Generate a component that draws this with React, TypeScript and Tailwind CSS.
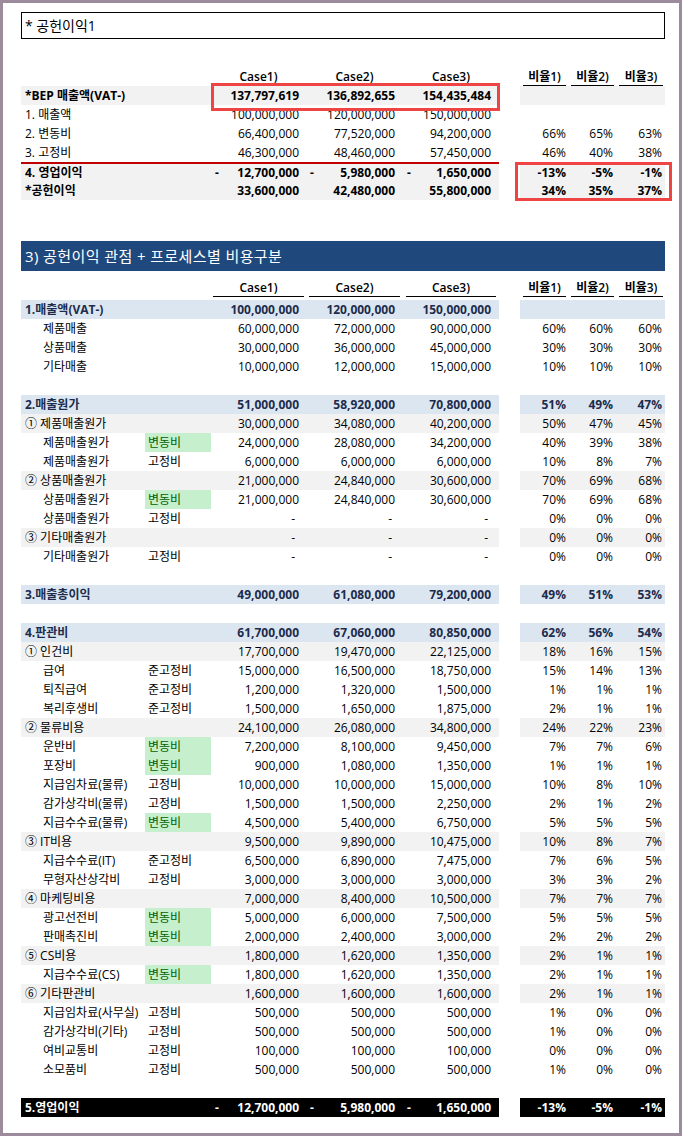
type Kind = "head" | "bep" | "plain" | "bold" | "cat" | "grp" | "item" | "empty" | "total";

type Row = {
  k: Kind;
  label?: string;
  tag?: string;
  v?: string[];
  p?: string[];
  line?: boolean;
};

const grid = "grid grid-cols-[124px_66px_95px_97px_96px_21px_48px_48px_49px]";
const valPad = ["pr-[7px]", "pr-[8px]", "pr-[8px]"];
const pctPad = ["pr-[2px]", "pr-[3px]", "pr-[3px]"];

const summary: Row[] = [
  { k: "bep", label: "*BEP 매출액(VAT-)", v: ["137,797,619", "136,892,655", "154,435,484"], p: ["", "", ""] },
  { k: "plain", label: "1. 매출액", v: ["100,000,000", "120,000,000", "150,000,000"] },
  { k: "plain", label: "2. 변동비", v: ["66,400,000", "77,520,000", "94,200,000"], p: ["66%", "65%", "63%"] },
  { k: "plain", label: "3. 고정비", v: ["46,300,000", "48,460,000", "57,450,000"], p: ["46%", "40%", "38%"] },
  { k: "bold", label: "4. 영업이익", v: ["-12,700,000", "-5,980,000", "-1,650,000"], p: ["-13%", "-5%", "-1%"], line: true },
  { k: "bold", label: "*공헌이익", v: ["33,600,000", "42,480,000", "55,800,000"], p: ["34%", "35%", "37%"] },
];

const detail: Row[] = [
  { k: "cat", label: "1.매출액(VAT-)", v: ["100,000,000", "120,000,000", "150,000,000"], p: ["", "", ""] },
  { k: "item", label: "제품매출", v: ["60,000,000", "72,000,000", "90,000,000"], p: ["60%", "60%", "60%"] },
  { k: "item", label: "상품매출", v: ["30,000,000", "36,000,000", "45,000,000"], p: ["30%", "30%", "30%"] },
  { k: "item", label: "기타매출", v: ["10,000,000", "12,000,000", "15,000,000"], p: ["10%", "10%", "10%"] },
  { k: "empty" },
  { k: "cat", label: "2.매출원가", v: ["51,000,000", "58,920,000", "70,800,000"], p: ["51%", "49%", "47%"] },
  { k: "grp", label: "① 제품매출원가", v: ["30,000,000", "34,080,000", "40,200,000"], p: ["50%", "47%", "45%"] },
  { k: "item", label: "제품매출원가", tag: "변동비", v: ["24,000,000", "28,080,000", "34,200,000"], p: ["40%", "39%", "38%"] },
  { k: "item", label: "제품매출원가", tag: "고정비", v: ["6,000,000", "6,000,000", "6,000,000"], p: ["10%", "8%", "7%"] },
  { k: "grp", label: "② 상품매출원가", v: ["21,000,000", "24,840,000", "30,600,000"], p: ["70%", "69%", "68%"] },
  { k: "item", label: "상품매출원가", tag: "변동비", v: ["21,000,000", "24,840,000", "30,600,000"], p: ["70%", "69%", "68%"] },
  { k: "item", label: "상품매출원가", tag: "고정비", v: ["-", "-", "-"], p: ["0%", "0%", "0%"] },
  { k: "grp", label: "③ 기타매출원가", v: ["-", "-", "-"], p: ["0%", "0%", "0%"] },
  { k: "item", label: "기타매출원가", tag: "고정비", v: ["-", "-", "-"], p: ["0%", "0%", "0%"] },
  { k: "empty" },
  { k: "cat", label: "3.매출총이익", v: ["49,000,000", "61,080,000", "79,200,000"], p: ["49%", "51%", "53%"] },
  { k: "empty" },
  { k: "cat", label: "4.판관비", v: ["61,700,000", "67,060,000", "80,850,000"], p: ["62%", "56%", "54%"] },
  { k: "grp", label: "① 인건비", v: ["17,700,000", "19,470,000", "22,125,000"], p: ["18%", "16%", "15%"] },
  { k: "item", label: "급여", tag: "준고정비", v: ["15,000,000", "16,500,000", "18,750,000"], p: ["15%", "14%", "13%"] },
  { k: "item", label: "퇴직급여", tag: "준고정비", v: ["1,200,000", "1,320,000", "1,500,000"], p: ["1%", "1%", "1%"] },
  { k: "item", label: "복리후생비", tag: "준고정비", v: ["1,500,000", "1,650,000", "1,875,000"], p: ["2%", "1%", "1%"] },
  { k: "grp", label: "② 물류비용", v: ["24,100,000", "26,080,000", "34,800,000"], p: ["24%", "22%", "23%"] },
  { k: "item", label: "운반비", tag: "변동비", v: ["7,200,000", "8,100,000", "9,450,000"], p: ["7%", "7%", "6%"] },
  { k: "item", label: "포장비", tag: "변동비", v: ["900,000", "1,080,000", "1,350,000"], p: ["1%", "1%", "1%"] },
  { k: "item", label: "지급임차료(물류)", tag: "고정비", v: ["10,000,000", "10,000,000", "15,000,000"], p: ["10%", "8%", "10%"] },
  { k: "item", label: "감가상각비(물류)", tag: "고정비", v: ["1,500,000", "1,500,000", "2,250,000"], p: ["2%", "1%", "2%"] },
  { k: "item", label: "지급수수료(물류)", tag: "변동비", v: ["4,500,000", "5,400,000", "6,750,000"], p: ["5%", "5%", "5%"] },
  { k: "grp", label: "③ IT비용", v: ["9,500,000", "9,890,000", "10,475,000"], p: ["10%", "8%", "7%"] },
  { k: "item", label: "지급수수료(IT)", tag: "준고정비", v: ["6,500,000", "6,890,000", "7,475,000"], p: ["7%", "6%", "5%"] },
  { k: "item", label: "무형자산상각비", tag: "고정비", v: ["3,000,000", "3,000,000", "3,000,000"], p: ["3%", "3%", "2%"] },
  { k: "grp", label: "④ 마케팅비용", v: ["7,000,000", "8,400,000", "10,500,000"], p: ["7%", "7%", "7%"] },
  { k: "item", label: "광고선전비", tag: "변동비", v: ["5,000,000", "6,000,000", "7,500,000"], p: ["5%", "5%", "5%"] },
  { k: "item", label: "판매촉진비", tag: "변동비", v: ["2,000,000", "2,400,000", "3,000,000"], p: ["2%", "2%", "2%"] },
  { k: "grp", label: "⑤ CS비용", v: ["1,800,000", "1,620,000", "1,350,000"], p: ["2%", "1%", "1%"] },
  { k: "item", label: "지급수수료(CS)", tag: "변동비", v: ["1,800,000", "1,620,000", "1,350,000"], p: ["2%", "1%", "1%"] },
  { k: "grp", label: "⑥ 기타판관비", v: ["1,600,000", "1,600,000", "1,600,000"], p: ["2%", "1%", "1%"] },
  { k: "item", label: "지급임차료(사무실)", tag: "고정비", v: ["500,000", "500,000", "500,000"], p: ["1%", "0%", "0%"] },
  { k: "item", label: "감가상각비(기타)", tag: "고정비", v: ["500,000", "500,000", "500,000"], p: ["1%", "0%", "0%"] },
  { k: "item", label: "여비교통비", tag: "고정비", v: ["100,000", "100,000", "100,000"], p: ["0%", "0%", "0%"] },
  { k: "item", label: "소모품비", tag: "고정비", v: ["500,000", "500,000", "500,000"], p: ["1%", "0%", "0%"] },
  { k: "empty" },
  { k: "total", label: "5.영업이익", v: ["-12,700,000", "-5,980,000", "-1,650,000"], p: ["-13%", "-5%", "-1%"] },
];

const bgOf = (k: Kind) => {
  if (k === "cat") return "bg-[#dce6f1] text-[#1c2c4c] font-bold";
  if (k === "grp") return "bg-[#f2f2f2]";
  if (k === "bep" || k === "bold") return "bg-[#f2f2f2] font-bold";
  if (k === "total") return "bg-black text-white font-bold";
  return "";
};

const Value = ({ s, i }: { s: string; i: number }) => {
  if (s.length > 1 && s.startsWith("-")) {
    return (
      <div className={`flex justify-between pl-[4px] ${valPad[i]}`}>
        <span>-</span>
        <span>{s.slice(1)}</span>
      </div>
    );
  }
  if (s === "-") return <div className="pr-[11px] text-right">-</div>;
  return <div className={`text-right ${valPad[i]}`}>{s}</div>;
};

const DataRow = ({ r }: { r: Row }) => {
  if (r.k === "empty") return <div className="h-[19px]" />;
  const bg = bgOf(r.k);
  const line = r.line ? "border-t-2 border-[#c00000] h-[19px] leading-[17px]" : "h-[19px] leading-[19px]";
  const indent = r.k === "item" ? "pl-[22px]" : "pl-[4px]";
  const green = r.tag === "변동비";
  return (
    <div className={`${grid} whitespace-nowrap`}>
      <div className={`${bg} ${line} ${indent} ${r.tag === undefined ? "col-span-2" : ""}`}>{r.label}</div>
      {r.tag !== undefined && (
        <div className={`${line} pl-[3px] ${green ? "bg-[#c6efce] text-[#006100]" : ""}`}>{r.tag}</div>
      )}
      {r.v?.map((s, i) => (
        <div key={i} className={`${bg} ${line}`}>
          <Value s={s} i={i} />
        </div>
      ))}
      <div />
      {r.p
        ? r.p.map((s, i) => (
            <div key={i} className={`${bg} ${line} text-right ${pctPad[i]}`}>
              {s}
            </div>
          ))
        : [0, 1, 2].map((i) => <div key={i} className={line} />)}
    </div>
  );
};

const HeadRow = ({ underlineCases, tall }: { underlineCases: boolean; tall: boolean }) => {
  const cell = tall ? "h-[26px] mb-[3px]" : "h-[19px]";
  const inner = tall ? "leading-[17px]" : "leading-[16px]";
  return (
    <div className={`${grid} font-semibold whitespace-nowrap`}>
      <div className="col-span-2" />
      {["Case1)", "Case2)", "Case3)"].map((c, i) => (
        <div key={c} className={`${cell} flex items-end ${i === 0 ? "px-[2px]" : "pl-[3px] pr-[3px]"}`}>
          <div className={`w-full text-center ${inner} ${underlineCases ? "border-b border-black" : "border-b border-transparent"}`}>
            {c}
          </div>
        </div>
      ))}
      <div />
      {["비율1)", "비율2)", "비율3)"].map((c) => (
        <div key={c} className={`${cell} flex items-end pl-[3px] pr-[2px]`}>
          <div className={`w-full text-center ${inner} border-b border-black`}>{c}</div>
        </div>
      ))}
    </div>
  );
};

export default function App() {
  return (
    <div className="h-[1136px] w-[682px] bg-[#9c8b9c] p-[3px] font-['Open_Sans','Noto_Sans_CJK_KR',sans-serif] text-[12px] text-black">
      <div className="relative h-full bg-white pl-[18px] pr-[14px] pt-[9px]">
        <div className="flex h-[27px] w-[644px] items-center border border-black pl-[3px] text-[14px]">* 공헌이익1</div>

        <div className="mt-[28px]">
          <HeadRow underlineCases={false} tall={false} />
          {summary.map((r, i) => (
            <DataRow key={i} r={r} />
          ))}
        </div>

        <div className="mt-[41px] flex h-[30px] w-[644px] items-center bg-[#1f497d] pl-[4px] text-[15px] tracking-[0.4px] text-white">
          3) 공헌이익 관점 + 프로세스별 비용구분
        </div>

        <div>
          <HeadRow underlineCases={true} tall={true} />
          {detail.map((r, i) => (
            <DataRow key={i} r={r} />
          ))}
        </div>

        <div className="pointer-events-none absolute left-[208px] top-[80px] h-[28px] w-[289px] border-[3px] border-[#ee4444]" />
        <div className="pointer-events-none absolute left-[512px] top-[159px] h-[39px] w-[157px] border-[3px] border-[#ee4444]" />
      </div>
    </div>
  );
}
